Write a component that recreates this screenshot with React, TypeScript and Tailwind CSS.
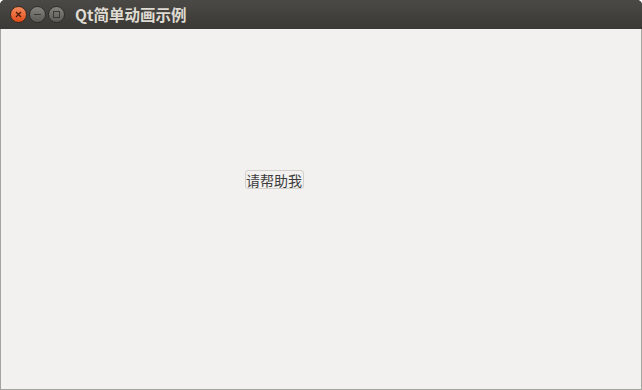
export default function App() {
  return (
    <div className="flex h-[390px] w-[642px] flex-col overflow-hidden rounded-t-[5px] bg-[#3c3b37] font-['Noto_Sans_CJK_SC','Liberation_Sans',sans-serif]">
      <div className="flex h-[29px] shrink-0 items-center bg-gradient-to-b from-[#4a4945] to-[#3a3935] pl-[10px]">
        <div className="flex items-center gap-[2px]">
          <div className="flex h-[17px] w-[17px] items-center justify-center rounded-full border border-[#3a2a20] bg-gradient-to-b from-[#f58a5a] to-[#df4a16]">
            <svg width="7" height="7" viewBox="0 0 7 7">
              <path d="M1 1 L6 6 M6 1 L1 6" stroke="#4a1a08" strokeWidth="1.3" />
            </svg>
          </div>
          <div className="flex h-[17px] w-[17px] items-center justify-center rounded-full border border-[#2e2d2a] bg-gradient-to-b from-[#85837d] to-[#5b5a55]">
            <div className="h-[1.5px] w-[7px] bg-[#3a3935]" />
          </div>
          <div className="flex h-[17px] w-[17px] items-center justify-center rounded-full border border-[#2e2d2a] bg-gradient-to-b from-[#85837d] to-[#5b5a55]">
            <div className="h-[7px] w-[7px] border border-[#3a3935]" />
          </div>
        </div>
        <span className="ml-[10px] text-[15.5px] leading-none font-bold text-[#dfdbd2]">Qt简单动画示例</span>
      </div>
      <div className="flex flex-1 items-start justify-center border-x border-b border-[#a3a39f] bg-[#f2f1f0]">
        <div className="mt-[141px] ml-[-94px] flex h-[19px] w-[59px] items-center justify-center rounded-[3px] border border-[#d2d0ca] text-[14px] leading-none text-[#3c3c3c]">
          请帮助我
        </div>
      </div>
    </div>
  );
}
